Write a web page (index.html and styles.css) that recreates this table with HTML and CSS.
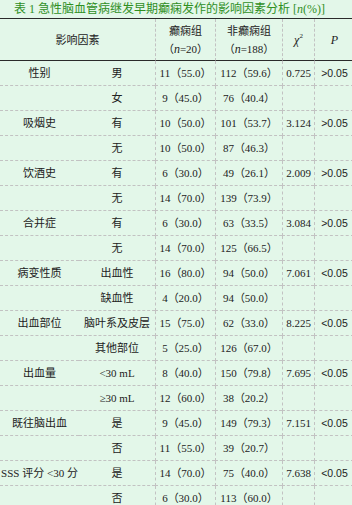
FILE: index.html
```html
<!DOCTYPE html>
<html lang="zh">
<head>
<meta charset="utf-8">
<title>表1</title>
<link rel="stylesheet" href="styles.css">
</head>
<body>
<div class="title">表 1 急性脑血管病继发早期癫痫发作的影响因素分析 [<i>n</i>(%)]</div>
<table class="data">
  <colgroup>
    <col class="c1"><col class="c2"><col class="c3"><col class="c4"><col class="c5"><col class="c6">
  </colgroup>
  <thead>
    <tr>
      <th colspan="2">影响因素</th>
      <th class="v">癫痫组<br>（<i>n</i>=20）</th>
      <th class="v">非癫痫组<br>（<i>n</i>=188）</th>
      <th class="v"><i class="chi">χ</i><sup>2</sup></th>
      <th class="v"><i>P</i></th>
    </tr>
  </thead>
  <tbody>
    <tr><td>性别</td><td>男</td><td class="v">11（55.0）</td><td class="v">112（59.6）</td><td class="v">0.725</td><td class="v p">&gt;0.05</td></tr>
    <tr><td></td><td>女</td><td class="v">9（45.0）</td><td class="v">76（40.4）</td><td class="v"></td><td class="v p"></td></tr>
    <tr><td>吸烟史</td><td>有</td><td class="v">10（50.0）</td><td class="v">101（53.7）</td><td class="v">3.124</td><td class="v p">&gt;0.05</td></tr>
    <tr><td></td><td>无</td><td class="v">10（50.0）</td><td class="v">87（46.3）</td><td class="v"></td><td class="v p"></td></tr>
    <tr><td>饮酒史</td><td>有</td><td class="v">6（30.0）</td><td class="v">49（26.1）</td><td class="v">2.009</td><td class="v p">&gt;0.05</td></tr>
    <tr><td></td><td>无</td><td class="v">14（70.0）</td><td class="v">139（73.9）</td><td class="v"></td><td class="v p"></td></tr>
    <tr><td>合并症</td><td>有</td><td class="v">6（30.0）</td><td class="v">63（33.5）</td><td class="v">3.084</td><td class="v p">&gt;0.05</td></tr>
    <tr><td></td><td>无</td><td class="v">14（70.0）</td><td class="v">125（66.5）</td><td class="v"></td><td class="v p"></td></tr>
    <tr><td>病变性质</td><td>出血性</td><td class="v">16（80.0）</td><td class="v">94（50.0）</td><td class="v">7.061</td><td class="v p">&lt;0.05</td></tr>
    <tr><td></td><td>缺血性</td><td class="v">4（20.0）</td><td class="v">94（50.0）</td><td class="v"></td><td class="v p"></td></tr>
    <tr><td>出血部位</td><td>脑叶系及皮层</td><td class="v">15（75.0）</td><td class="v">62（33.0）</td><td class="v">8.225</td><td class="v p">&lt;0.05</td></tr>
    <tr><td></td><td>其他部位</td><td class="v">5（25.0）</td><td class="v">126（67.0）</td><td class="v"></td><td class="v p"></td></tr>
    <tr><td>出血量</td><td>&lt;30 mL</td><td class="v">8（40.0）</td><td class="v">150（79.8）</td><td class="v">7.695</td><td class="v p">&lt;0.05</td></tr>
    <tr><td></td><td>≥30 mL</td><td class="v">12（60.0）</td><td class="v">38（20.2）</td><td class="v"></td><td class="v p"></td></tr>
    <tr><td>既往脑出血</td><td>是</td><td class="v">9（45.0）</td><td class="v">149（79.3）</td><td class="v">7.151</td><td class="v p">&lt;0.05</td></tr>
    <tr><td></td><td>否</td><td class="v">11（55.0）</td><td class="v">39（20.7）</td><td class="v"></td><td class="v p"></td></tr>
    <tr><td>SSS 评分 &lt;30 分</td><td>是</td><td class="v">14（70.0）</td><td class="v">75（40.0）</td><td class="v">7.638</td><td class="v p">&lt;0.05</td></tr>
    <tr><td></td><td>否</td><td class="v">6（30.0）</td><td class="v">113（60.0）</td><td class="v"></td><td class="v p"></td></tr>
  </tbody>
</table>
</body>
</html>
```
FILE: styles.css
```css
html, body {
  margin: 0;
  padding: 0;
}
body {
  background: #e3f7e9;
  width: 352px;
  overflow: hidden;
  font-family: "Liberation Serif", "Noto Sans CJK SC", serif;
  font-size: 11px;
  color: #222;
}
.title {
  height: 18px;
  line-height: 18px;
  padding-left: 14px;
  font-size: 12px;
  color: #2f8f1f;
  white-space: nowrap;
}
.data {
  border-collapse: separate;
  border-spacing: 0;
  table-layout: fixed;
  width: 354px;
  border-top: 1px solid #2a2a2a;
}
.c1 { width: 79px; }
.c2 { width: 76px; }
.c3 { width: 60px; }
.c4 { width: 67px; }
.c5 { width: 32px; }
.c6 { width: 40px; }
.data th {
  height: 41px;
  padding: 0;
  font-weight: normal;
  line-height: 18px;
  text-align: center;
  vertical-align: middle;
  border-bottom: 1px solid #2a2a2a;
  white-space: nowrap;
}
.data th i {
  font-size: 12px;
}
.data th sup {
  font-size: 7px;
  vertical-align: 6px;
  line-height: 0;
}
.data td {
  height: 24px;
  padding: 0;
  text-align: center;
  vertical-align: middle;
  white-space: nowrap;
  border-bottom: 1px dashed #c2c2c2;
  line-height: 14px;
}
.data .v {
  border-left: 1px dashed #c2c2c2;
}
.data td.p {
  font-family: "Liberation Sans", "Noto Sans CJK SC", sans-serif;
  font-size: 10.5px;
}
```
